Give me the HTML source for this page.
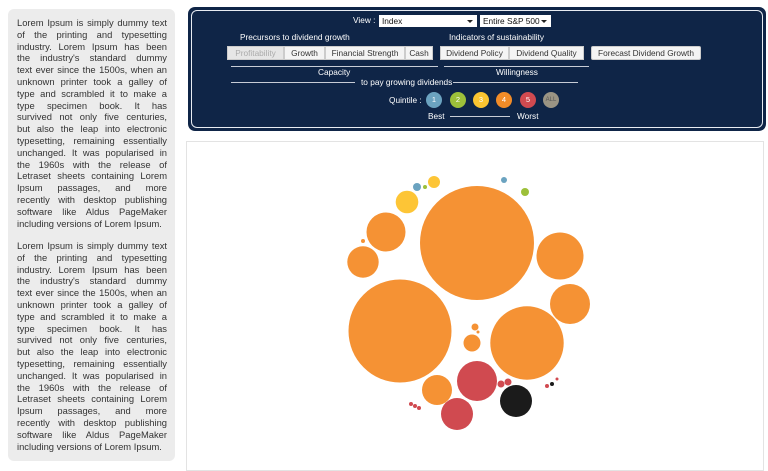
<!DOCTYPE html>
<html><head><meta charset="utf-8"><style>
*{margin:0;padding:0;box-sizing:border-box}
body{width:768px;height:468px;background:#fff;position:relative;overflow:hidden;font-family:"Liberation Sans",sans-serif}
.side{position:absolute;left:8px;top:9px;width:167px;height:452px;background:#ececec;border-radius:6px}
.p{position:absolute;left:17px;width:150px;font-size:9.4px;color:#333;line-height:11.8px}
.p div{text-align:justify;text-align-last:justify;white-space:nowrap;overflow:visible}
.p div.l{text-align-last:left}
.hdr{position:absolute;left:188px;top:7px;width:578px;height:124px;background:#0f2547;border-radius:7px}
.hin{position:absolute;left:3px;top:3px;right:3px;bottom:3px;border:1.3px solid #e8ecf2;border-radius:6px}
.t{position:absolute;color:#fff;font-size:8.3px;white-space:nowrap}
.sel{position:absolute;top:15px;height:12px;background:#fff;font-size:8.3px;color:#111;padding-left:3px;line-height:12px}
.sel:after{content:"";position:absolute;right:4px;top:5px;border:3px solid transparent;border-top:3px solid #222}
.btn{position:absolute;top:46px;height:14px;background:#f4f4f4;border:1px solid #ccc;font-size:8.3px;color:#333;text-align:center;line-height:12px}
.ln{position:absolute;height:1px;background:#c7ccd6}
.q{position:absolute;top:92px;width:16px;height:16px;border-radius:50%;color:#fff;font-size:7.5px;text-align:center;line-height:16px}
.chart{position:absolute;left:186px;top:141px;width:578px;height:330px;border:1px solid #e3e3e3}
svg{position:absolute;left:0;top:0}
</style></head><body>
<div class="side"></div>
<div class="p" style="top:17px">
<div>Lorem Ipsum is simply dummy text</div><div>of the printing and typesetting</div><div>industry. Lorem Ipsum has been</div><div>the industry's standard dummy</div><div>text ever since the 1500s, when an</div><div>unknown printer took a galley of</div><div>type and scrambled it to make a</div><div>type specimen book. It has</div><div>survived not only five centuries,</div><div>but also the leap into electronic</div><div>typesetting, remaining essentially</div><div>unchanged. It was popularised in</div><div>the 1960s with the release of</div><div>Letraset sheets containing Lorem</div><div>Ipsum passages, and more</div><div>recently with desktop publishing</div><div>software like Aldus PageMaker</div><div class="l">including versions of Lorem Ipsum.</div>
</div>
<div class="p" style="top:240px">
<div>Lorem Ipsum is simply dummy text</div><div>of the printing and typesetting</div><div>industry. Lorem Ipsum has been</div><div>the industry's standard dummy</div><div>text ever since the 1500s, when an</div><div>unknown printer took a galley of</div><div>type and scrambled it to make a</div><div>type specimen book. It has</div><div>survived not only five centuries,</div><div>but also the leap into electronic</div><div>typesetting, remaining essentially</div><div>unchanged. It was popularised in</div><div>the 1960s with the release of</div><div>Letraset sheets containing Lorem</div><div>Ipsum passages, and more</div><div>recently with desktop publishing</div><div>software like Aldus PageMaker</div><div class="l">including versions of Lorem Ipsum.</div>
</div>

<div class="hdr"><div class="hin"></div></div>
<div class="t" style="left:353px;top:15px">View :</div>
<div class="sel" style="left:379px;width:98px">Index</div>
<div class="sel" style="left:480px;width:71px">Entire S&amp;P 500</div>
<div class="t" style="left:240px;top:32px">Precursors to dividend growth</div>
<div class="t" style="left:449px;top:32px">Indicators of sustainability</div>
<div class="btn" style="left:227px;width:57px;color:#aaa;background:#e6e6e6">Profitability</div>
<div class="btn" style="left:284px;width:41px">Growth</div>
<div class="btn" style="left:325px;width:80px">Financial Strength</div>
<div class="btn" style="left:405px;width:28px">Cash</div>
<div class="btn" style="left:440px;width:69px">Dividend Policy</div>
<div class="btn" style="left:509px;width:75px">Dividend Quality</div>
<div class="btn" style="left:591px;width:110px;border-radius:2px">Forecast Dividend Growth</div>
<div class="ln" style="left:231px;top:66px;width:207px"></div>
<div class="ln" style="left:444px;top:66px;width:145px"></div>
<div class="t" style="left:318px;top:67px">Capacity</div>
<div class="t" style="left:496px;top:67px">Willingness</div>
<div class="ln" style="left:231px;top:82px;width:124px"></div>
<div class="t" style="left:361px;top:77px">to pay growing dividends</div>
<div class="ln" style="left:453px;top:82px;width:125px"></div>
<div class="t" style="left:389px;top:95px">Quintile :</div>
<div class="q" style="left:426px;background:#6ba3c0">1</div>
<div class="q" style="left:450px;background:#9dc03a">2</div>
<div class="q" style="left:473px;background:#fbc531">3</div>
<div class="q" style="left:496px;background:#f28c28">4</div>
<div class="q" style="left:520px;background:#d04a50">5</div>
<div class="q" style="left:543px;background:#9a9484;font-size:6px;color:#555">ALL</div>
<div class="t" style="left:428px;top:111px">Best</div>
<div class="ln" style="left:450px;top:116px;width:60px"></div>
<div class="t" style="left:517px;top:111px">Worst</div>

<div class="chart"></div>
<svg width="768" height="468">
<g fill="#f59234">
<circle cx="477" cy="243" r="57"/><circle cx="400" cy="331" r="51.5"/><circle cx="527" cy="343" r="36.7"/>
<circle cx="560" cy="256" r="23.5"/><circle cx="570" cy="304" r="20"/><circle cx="386" cy="232" r="19.5"/>
<circle cx="363" cy="262" r="15.7"/><circle cx="363" cy="241" r="2"/><circle cx="475" cy="327" r="3.5"/>
<circle cx="478" cy="332" r="1.5"/><circle cx="472" cy="343" r="8.5"/><circle cx="437" cy="390" r="15"/>
</g>
<circle cx="407" cy="202" r="11.3" fill="#fdc536"/><circle cx="434" cy="182" r="6" fill="#fdc536"/>
<circle cx="417" cy="187" r="4" fill="#6ba3c0"/><circle cx="425" cy="187" r="2" fill="#9dc03a"/>
<circle cx="504" cy="180" r="3" fill="#6ba3c0"/><circle cx="525" cy="192" r="4" fill="#9dc03a"/>
<g fill="#d04a50">
<circle cx="477" cy="381" r="20"/><circle cx="457" cy="414" r="16"/><circle cx="501" cy="384" r="3.5"/>
<circle cx="508" cy="382" r="3.5"/><circle cx="547" cy="386" r="2"/><circle cx="557" cy="379" r="1.5"/>
<circle cx="411" cy="404" r="2"/><circle cx="415" cy="406" r="2"/><circle cx="419" cy="408" r="2"/>
</g>
<circle cx="516" cy="401" r="16" fill="#1b1b1b"/><circle cx="552" cy="384" r="2" fill="#1b1b1b"/>
</svg>
</body></html>
